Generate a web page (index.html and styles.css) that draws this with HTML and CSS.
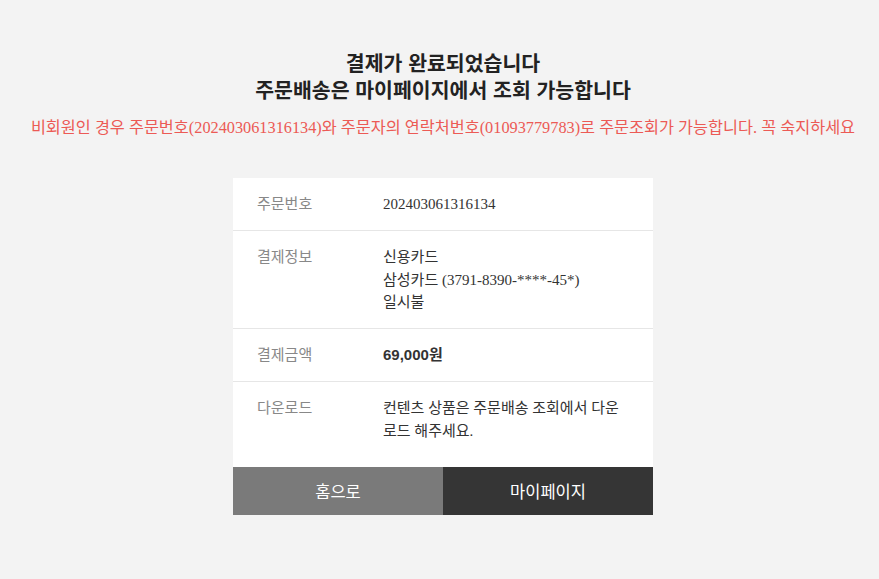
FILE: index.html
```html
<!DOCTYPE html>
<html lang="ko">
<head>
    <meta charset="UTF-8">
    <meta name="viewport" content="width=device-width, initial-scale=1.0">
    <title>결제완료</title>
    <link rel="stylesheet" href="styles.css">
</head>
<body>

<div class="complete">
    <h2 class="title">결제가 완료되었습니다<br>주문배송은 마이페이지에서 조회 가능합니다</h2>
    <p class="notice">비회원인 경우 주문번호(202403061316134)와 주문자의 연락처번호(01093779783)로 주문조회가 가능합니다. 꼭 숙지하세요</p>

    <div class="order-box">
        <div class="row">
            <div class="label">주문번호</div>
            <div class="value">202403061316134</div>
        </div>
        <div class="row">
            <div class="label">결제정보</div>
            <div class="value">신용카드<br>삼성카드 (3791-8390-****-45*)<br>일시불</div>
        </div>
        <div class="row">
            <div class="label">결제금액</div>
            <div class="value price">69,000원</div>
        </div>
        <div class="row last">
            <div class="label">다운로드</div>
            <div class="value">컨텐츠 상품은 주문배송 조회에서 다운로드 해주세요.</div>
        </div>
        <div class="buttons">
            <a href="#" class="btn home">홈으로</a>
            <a href="#" class="btn mypage">마이페이지</a>
        </div>
    </div>
</div>

</body>
</html>
```

FILE: styles.css
```css
body {
    font-family: "Liberation Serif", "Noto Sans CJK KR", serif;
    margin: 0;
    background-color: #f3f3f3;
    color: #333;
}
.complete {
    padding: 49px 0 0 7px;
    text-align: center;
}
.title {
    margin: 0;
    font-family: "Noto Sans CJK KR", sans-serif;
    font-size: 20.5px;
    font-weight: bold;
    line-height: 27px;
    color: #222;
}
.notice {
    margin: 14px 0 0;
    font-size: 16.3px;
    line-height: 22px;
    color: #ec5a55;
}
.order-box {
    width: 420px;
    margin: 39px auto 0;
    background-color: #fff;
    text-align: left;
}
.row {
    display: flex;
    padding: 15px 24px 14.5px;
    border-bottom: 1px solid #e6e6e6;
    font-size: 15px;
    line-height: 22.5px;
}
.row.last {
    border-bottom: none;
    padding-bottom: 25px;
}
.label {
    width: 126px;
    flex-shrink: 0;
    color: #888;
}
.value {
    flex: 1;
    color: #333;
}
.value.price {
    font-family: "Liberation Sans", "Noto Sans CJK KR", sans-serif;
    font-weight: bold;
}
.buttons {
    display: flex;
}
.btn {
    flex: 1;
    height: 48px;
    line-height: 48px;
    text-align: center;
    font-family: "Noto Sans CJK KR", sans-serif;
    font-size: 16.5px;
    color: #fff;
    text-decoration: none;
}
.btn.home {
    background-color: #7a7a7a;
}
.btn.mypage {
    background-color: #353535;
}
```
